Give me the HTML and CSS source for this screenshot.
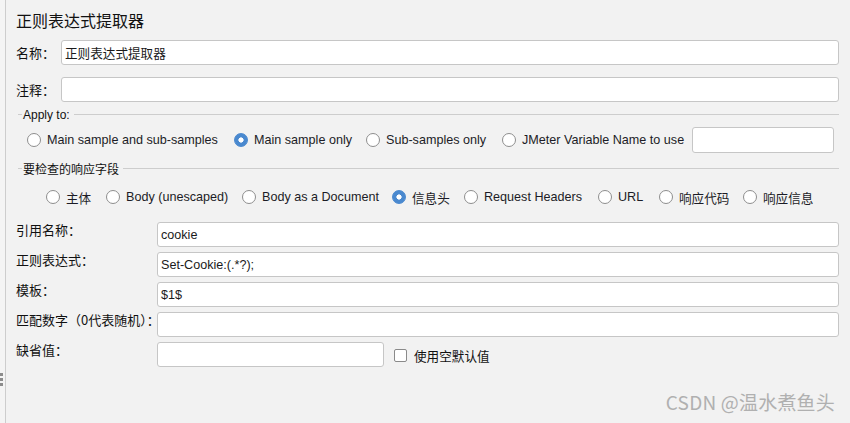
FILE: index.html
```html
<!DOCTYPE html>
<html lang="zh">
<head>
<meta charset="utf-8">
<title>正则表达式提取器</title>
<link rel="stylesheet" href="styles.css">
</head>
<body>
<div class="app">
  <div class="gutter">
    <div class="grip"><span></span><span></span><span></span></div>
  </div>
  <div class="panel">
    <div class="title">正则表达式提取器</div>

    <div class="row row-name">
      <span class="lbl-short">名称：</span>
      <div class="input">正则表达式提取器</div>
    </div>
    <div class="row row-comment">
      <span class="lbl-short">注释：</span>
      <div class="input"></div>
    </div>

    <div class="section sec-apply"><span class="sec-title">Apply to:</span></div>
    <div class="radios radios-apply">
      <span class="opt"><span class="radio"></span><span>Main sample and sub-samples</span></span>
      <span class="opt"><span class="radio checked"></span><span>Main sample only</span></span>
      <span class="opt"><span class="radio"></span><span>Sub-samples only</span></span>
      <span class="opt"><span class="radio"></span><span>JMeter Variable Name to use</span></span>
      <div class="input var-input"></div>
    </div>

    <div class="section sec-field"><span class="sec-title">要检查的响应字段</span></div>
    <div class="radios radios-field">
      <span class="opt"><span class="radio"></span><span>主体</span></span>
      <span class="opt"><span class="radio"></span><span>Body (unescaped)</span></span>
      <span class="opt"><span class="radio"></span><span>Body as a Document</span></span>
      <span class="opt"><span class="radio checked"></span><span>信息头</span></span>
      <span class="opt"><span class="radio"></span><span>Request Headers</span></span>
      <span class="opt"><span class="radio"></span><span>URL</span></span>
      <span class="opt"><span class="radio"></span><span>响应代码</span></span>
      <span class="opt"><span class="radio"></span><span>响应信息</span></span>
    </div>

    <div class="form">
      <div class="frow">
        <span class="lbl">引用名称：</span>
        <div class="input">cookie</div>
      </div>
      <div class="frow">
        <span class="lbl">正则表达式：</span>
        <div class="input">Set-Cookie:(.*?);</div>
      </div>
      <div class="frow">
        <span class="lbl">模板：</span>
        <div class="input">$1$</div>
      </div>
      <div class="frow">
        <span class="lbl">匹配数字（0代表随机）：</span>
        <div class="input"></div>
      </div>
      <div class="frow">
        <span class="lbl">缺省值：</span>
        <div class="input default-input"></div>
        <span class="check"><span class="box"></span><span>使用空默认值</span></span>
      </div>
    </div>
  </div>
</div>
<div class="watermark">CSDN @温水煮鱼头</div>
</body>
</html>
```
FILE: styles.css
```css
* { box-sizing: border-box; }

html, body {
  margin: 0;
  padding: 0;
}

body {
  width: 850px;
  height: 423px;
  overflow: hidden;
  background: #f2f2f2;
  color: #1e1e1e;
  font-family: "Liberation Sans", "Noto Sans CJK SC", sans-serif;
  font-size: 12.6px;
  position: relative;
}

.app {
  display: flex;
  height: 423px;
}

.gutter {
  width: 5px;
  position: relative;
  background: #f4f4f4;
}

.grip {
  position: absolute;
  left: 0;
  top: 373px;
  display: flex;
  flex-direction: column;
  gap: 2px;
}

.grip span {
  width: 3px;
  height: 3px;
  background: #8c8c8c;
}

.panel {
  flex: 1;
  border-left: 1px solid #cdcdcd;
  padding: 10px 11px 0 10px;
}

.title {
  font-family: "Noto Sans CJK SC", sans-serif;
  font-size: 16px;
  line-height: 20px;
  height: 20px;
  color: #111;
}

.row {
  display: flex;
  align-items: center;
  height: 25px;
}

.row-name { margin-top: 10px; }
.row-comment { margin-top: 12px; }

.lbl-short {
  width: 45px;
  flex: none;
  font-family: "Noto Sans CJK SC", sans-serif;
  font-size: 13px;
  color: #111;
}

.input {
  flex: 1;
  height: 25px;
  background: #fff;
  border: 1px solid #c6c6c6;
  border-radius: 3px;
  padding: 0 3px;
  display: flex;
  align-items: center;
  font-size: 12.6px;
  color: #1a1a1a;
  white-space: nowrap;
}

.section {
  display: flex;
  align-items: center;
  height: 13px;
  padding-left: 2px;
  font-size: 12px;
  color: #111;
}

.section::before {
  content: "";
  width: 4px;
  height: 1px;
  background: #cdcdcd;
  margin-right: 1px;
}

.section::after {
  content: "";
  flex: 1;
  height: 1px;
  background: #cdcdcd;
  margin-left: 4px;
}

.sec-apply { margin-top: 6px; }
.sec-field { margin-top: 9px; }

.sec-field .sec-title {
  font-family: "Noto Sans CJK SC", sans-serif;
}

.radios {
  display: grid;
  align-items: center;
}

.radios-apply {
  margin-top: 6px;
  height: 26px;
  padding: 0 5px 0 11px;
  grid-template-columns: 207px 132px 136px 190px 1fr;
}

.radios-apply .var-input {
  height: 26px;
}

.radios-field {
  margin-top: 12px;
  height: 20px;
  padding-left: 30px;
  grid-template-columns: 60px 136px 150px 72px 134px 61px 84px 1fr;
}

.opt {
  display: flex;
  align-items: center;
  gap: 6px;
  white-space: nowrap;
  color: #1c1c26;
}

.radio {
  width: 14px;
  height: 14px;
  flex: none;
  border-radius: 50%;
  border: 1px solid #8e8e8e;
  background: #fff;
}

.radio.checked {
  border-color: #4a89cf;
  background: radial-gradient(circle, #fff 0, #fff 2.3px, #4a89cf 2.9px);
}

.form {
  margin-top: 15px;
  display: flex;
  flex-direction: column;
  gap: 5px;
}

.frow {
  display: flex;
  align-items: flex-start;
  height: 25px;
}

.lbl {
  width: 141px;
  flex: none;
  font-family: "Noto Sans CJK SC", sans-serif;
  font-size: 13px;
  line-height: 16px;
  color: #111;
  white-space: nowrap;
}

.default-input {
  flex: none;
  width: 227px;
}

.check {
  display: flex;
  align-items: center;
  gap: 7px;
  margin-left: 10px;
  height: 25px;
  padding-top: 1px;
  font-family: "Noto Sans CJK SC", sans-serif;
  font-size: 12.6px;
  color: #111;
}

.box {
  width: 13px;
  height: 13px;
  border: 1px solid #8a8a8a;
  border-radius: 2px;
  background: #fff;
}

.watermark {
  position: absolute;
  right: 15px;
  bottom: 8px;
  font-family: "Noto Sans CJK SC", sans-serif;
  font-size: 19px;
  color: #b0b0b0;
  letter-spacing: 0.2px;
}
```
